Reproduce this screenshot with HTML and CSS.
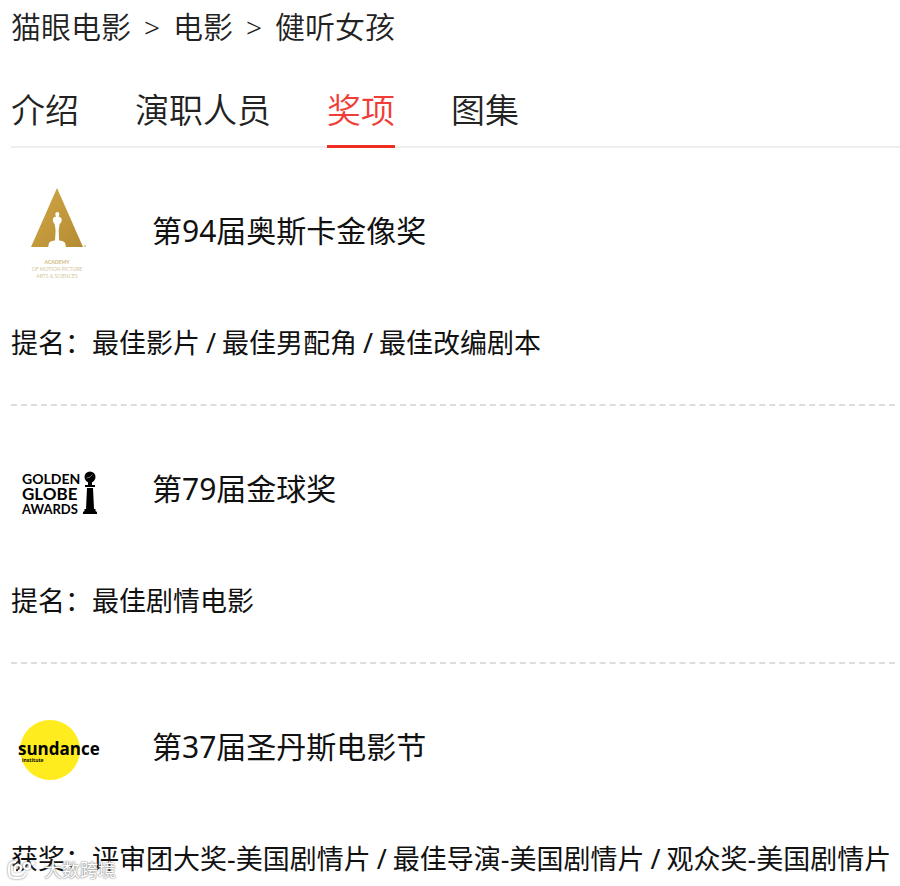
FILE: index.html
```html
<!DOCTYPE html>
<html lang="zh-CN">
<head>
    <meta charset="UTF-8">
    <title>健听女孩 - 奖项</title>
    <meta name="viewport" content="width=device-width, initial-scale=1">
    <link rel="stylesheet" href="styles.css">
</head>
<body>
<div class="page">
    <nav class="crumbs">
        <a href="#">猫眼电影</a>
        <span>&gt;</span>
        <a href="#">电影</a>
        <span>&gt;</span>
        <a href="#">健听女孩</a>
    </nav>

    <nav class="tabs">
        <a href="#">介绍</a>
        <a href="#">演职人员</a>
        <a href="#" class="active">奖项</a>
        <a href="#">图集</a>
    </nav>

    <ul class="awards">
        <li class="award">
            <div class="award-head">
                <svg class="award-logo" viewBox="0 0 94 94">
                    <defs>
                        <linearGradient id="gold" x1="0" y1="0" x2="1" y2="1">
                            <stop offset="0" stop-color="#d0a746"/>
                            <stop offset="1" stop-color="#b58b32"/>
                        </linearGradient>
                    </defs>
                    <path fill="url(#gold)" d="M46 3 L72 62 H20 Z"/>
                    <!-- statuette -->
                    <path fill="#fff" d="M46.500 27 q1.800 0 1.800 2 q0 1.500 -.8 2.400 q2.900 .6 3.300 3 q0 3 -2.300 5.200 l-.8 6 l.4 10 q4.500 .4 6 2.400 l1 4.500 H37 l1 -4.500 q1.500 -2 6 -2.400 l.6 -10 l-.8 -6 q-2 -2.200 -2 -5.200 q.1 -2.400 3.300 -3 q-.8 -.9 -.8 -2.400 q0 -2 2.200 -2 Z"/>
                    <circle cx="74" cy="61" r="1" fill="#d9c48c"/>
                    <text class="oscar-name" x="46" y="79">ACADEMY</text>
                    <text class="oscar-sub" x="46" y="86">OF MOTION PICTURE</text>
                    <text class="oscar-sub" x="46" y="93">ARTS &amp; SCIENCES</text>
                </svg>
                <h2>第94届奥斯卡金像奖</h2>
            </div>
            <div class="award-detail">
                <span>提名：</span>
                <span>最佳影片</span><i>/</i><span>最佳男配角</span><i>/</i><span>最佳改编剧本</span>
            </div>
        </li>

        <li class="award">
            <div class="award-head">
                <svg class="award-logo" viewBox="0 0 94 94">
                    <text class="globe-top" x="11" y="41">GOLDEN</text>
                    <text class="globe-mid" x="11" y="57">GLOBE</text>
                    <text class="globe-end" x="11" y="71">AWARDS</text>
                    <!-- trophy -->
                    <circle cx="79" cy="34" r="5.500"/>
                    <path d="M77 39 h4 v3 h3 v2 H74 v-2 h3 Z M76 45 h6 l1 21 h1.500 v2 l1.500 1 v2 H72 v-2 l1.500 -1 v-2 h1.500 Z"/>
                    <path class="globe-line" d="M75.500 35 q4 0 6 -3.500"/>
                </svg>
                <h2>第79届金球奖</h2>
            </div>
            <div class="award-detail">
                <span>提名：</span>
                <span>最佳剧情电影</span>
            </div>
        </li>

        <li class="award">
            <div class="award-head">
                <svg class="award-logo" viewBox="0 0 94 94">
                    <circle cx="39" cy="49" r="30" fill="#ffec1f"/>
                    <text class="sundance-name" x="7" y="54">sundance</text>
                    <text class="sundance-sub" x="11" y="61">institute</text>
                </svg>
                <h2>第37届圣丹斯电影节</h2>
            </div>
            <div class="award-detail">
                <span>获奖：</span>
                <span>评审团大奖-美国剧情片</span><i>/</i><span>最佳导演-美国剧情片</span><i>/</i><span>观众奖-美国剧情片</span>
            </div>
        </li>
    </ul>
</div>

<div class="watermark">
    <svg viewBox="0 0 30 24">
        <path d="M10 4 H8 Q3 4 3 10 V14 Q3 20 9 20 H13 Q18 20 20 15"/>
        <path d="M9 14 V10 Q9 7 12 7 Q15 7 15 10 Q15 13 12 13"/>
        <circle cx="21" cy="8" r="3"/>
        <circle cx="27" cy="5" r="1"/>
    </svg>
    <span>大数跨境</span>
</div>
</body>
</html>
```

FILE: styles.css
```css
* {
    box-sizing: border-box;
    margin: 0;
    padding: 0;
}

body {
    background: #fff;
    color: #111;
    font-family: "Noto Sans", "Noto Sans CJK SC", sans-serif;
}

a {
    color: inherit;
    text-decoration: none;
}

.page {
    padding: 5px 0 7px 11px;
}

.crumbs {
    display: flex;
    gap: 13px;
    font-size: 30px;
    line-height: 44px;
    font-weight: 350;
    color: #222;
}

.crumbs span {
    font-size: 28px;
}

.tabs {
    display: flex;
    gap: 56px;
    margin-top: 37px;
    border-bottom: 2px solid #eee;
    font-size: 34px;
    line-height: 48px;
    font-weight: 350;
    color: #222;
}

.tabs a {
    padding-bottom: 11px;
    margin-bottom: -2px;
    border-bottom: 3px solid transparent;
}

.tabs .active {
    color: #f03d37;
    border-color: #ee2e20;
}

.awards {
    list-style: none;
    margin-right: 5px;
}

.award {
    padding: 37px 0 41px;
    border-bottom: 2px dashed #ddd;
}

.award:last-child {
    padding-bottom: 0;
    border-bottom: 0;
}

.award-head {
    display: flex;
    align-items: center;
    gap: 47px;
}

.award-logo {
    width: 94px;
    height: 94px;
}

.award h2 {
    padding-bottom: 2px;
    font-size: 30px;
    line-height: 44px;
    font-weight: 400;
}

.award-detail {
    display: flex;
    margin-top: 44px;
    font-size: 27px;
    line-height: 40px;
    white-space: nowrap;
}

.award-detail i {
    padding: 0 6px;
    font-style: normal;
}

/* logos */
.oscar-name,
.oscar-sub {
    font-family: Lato, sans-serif;
    text-anchor: middle;
    fill: #cdb87a;
}

.oscar-name {
    font-size: 5px;
    font-weight: 700;
}

.oscar-sub {
    font-size: 5px;
    fill: #d3c69c;
}

.globe-top,
.globe-mid,
.globe-end {
    font-family: Lato, sans-serif;
    font-weight: 700;
}

.globe-top {
    font-size: 14px;
}

.globe-mid {
    font-size: 17px;
}

.globe-end {
    font-size: 13px;
}

.globe-line {
    fill: none;
    stroke: #777;
}

.sundance-name {
    font-family: "Open Sans", sans-serif;
    font-weight: 700;
    font-size: 17px;
}

.sundance-sub {
    font-family: "Open Sans", sans-serif;
    font-weight: 700;
    font-size: 5px;
}

.watermark {
    position: absolute;
    left: 6px;
    top: 857px;
    display: flex;
    align-items: center;
    gap: 8px;
    color: #fff;
    font-size: 18px;
    line-height: 26px;
    text-shadow: 0 0 2px #777, 0 0 1px #888;
}

.watermark svg {
    width: 30px;
    height: 24px;
    fill: none;
    stroke: #fff;
    stroke-width: 2;
    filter: drop-shadow(0 0 1px #777);
}
```
